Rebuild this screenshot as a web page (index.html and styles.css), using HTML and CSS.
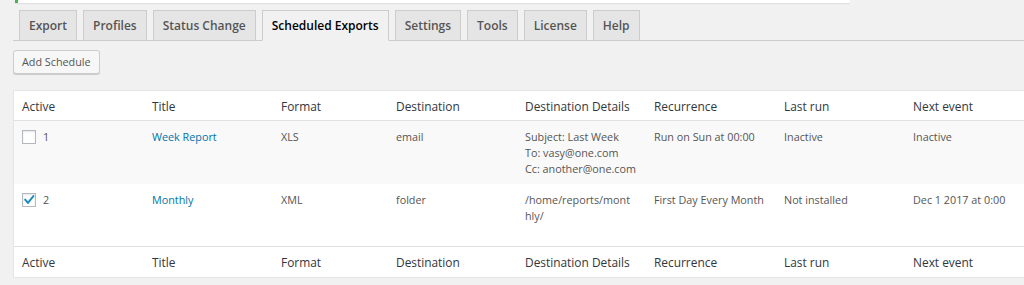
FILE: index.html
```html
<!DOCTYPE html>
<html>
<head>
<meta charset="utf-8">
<title>Scheduled Exports</title>
<link rel="stylesheet" href="styles.css">
</head>
<body>
<div class="wrap">
  <div class="notice"></div>
  <nav class="tabs">
    <a class="tab">Export</a>
    <a class="tab">Profiles</a>
    <a class="tab">Status Change</a>
    <a class="tab active">Scheduled Exports</a>
    <a class="tab">Settings</a>
    <a class="tab">Tools</a>
    <a class="tab">License</a>
    <a class="tab">Help</a>
  </nav>
  <button class="btn" type="button">Add Schedule</button>
  <table class="list">
    <colgroup>
      <col class="w130"><col class="w129"><col class="w115"><col class="w129">
      <col class="w129"><col class="w130"><col class="w129"><col class="w130">
    </colgroup>
    <thead>
      <tr class="hrow">
        <th>Active</th><th>Title</th><th>Format</th><th>Destination</th>
        <th>Destination Details</th><th>Recurrence</th><th>Last run</th><th>Next event</th>
      </tr>
    </thead>
    <tbody>
      <tr class="row r1 alt">
        <td><div class="act"><span class="cb"></span><span>1</span></div></td>
        <td><a class="link">Week Report</a></td>
        <td>XLS</td>
        <td>email</td>
        <td>Subject: Last Week<br>To: vasy@one.com<br>Cc: another@one.com</td>
        <td>Run on Sun at 00:00</td>
        <td>Inactive</td>
        <td>Inactive</td>
      </tr>
      <tr class="row r2">
        <td><div class="act"><span class="cb"><svg class="tick" viewBox="0 0 14 14"><path d="M3.2 6.6 L5.9 9.9 L11.4 3.1"/></svg></span><span>2</span></div></td>
        <td><a class="link">Monthly</a></td>
        <td>XML</td>
        <td>folder</td>
        <td>/home/reports/mont<br>hly/</td>
        <td>First Day Every Month</td>
        <td>Not installed</td>
        <td>Dec 1 2017 at 0:00</td>
      </tr>
    </tbody>
    <tfoot>
      <tr class="frow">
        <th>Active</th><th>Title</th><th>Format</th><th>Destination</th>
        <th>Destination Details</th><th>Recurrence</th><th>Last run</th><th>Next event</th>
      </tr>
    </tfoot>
  </table>
</div>
</body>
</html>
```
FILE: styles.css
```css
html, body {
  margin: 0;
  padding: 0;
  background: #f1f1f1;
  overflow: hidden;
}
body {
  font-family: "Open Sans", "Liberation Sans", sans-serif;
  font-size: 10.8px;
  color: #555;
}
.wrap {
  padding-left: 13px;
}
.notice {
  margin-left: 2px;
  width: 835px;
  height: 3px;
  box-sizing: border-box;
  background: #fff;
  border-left: 3px solid #46b450;
  box-shadow: 0 1px 1px rgba(0, 0, 0, 0.08);
}
.tabs {
  display: flex;
  padding-top: 7px;
  border-bottom: 1px solid #ccc;
}
.tab {
  display: flex;
  align-items: center;
  box-sizing: border-box;
  height: 31px;
  margin-left: 6px;
  margin-bottom: -1px;
  padding: 0 9px;
  border: 1px solid #ccc;
  background: #e5e5e5;
  color: #555;
  font-weight: 600;
  font-size: 12px;
  white-space: nowrap;
}
.tab.active {
  background: #f1f1f1;
  border-bottom-color: #f1f1f1;
  color: #000;
}
.btn {
  display: block;
  margin: 9px 0 0 0;
  height: 24px;
  padding: 0 8px;
  border: 1px solid #ccc;
  border-radius: 3px;
  background: #f7f7f7;
  box-shadow: 0 1px 0 #ccc;
  color: #555;
  font-family: inherit;
  font-size: 10.8px;
  line-height: 22px;
}
.list {
  margin-top: 16px;
  width: 1023px;
  table-layout: fixed;
  border-collapse: separate;
  border-spacing: 0;
  border: 1px solid #e5e5e5;
  background: #fff;
  box-shadow: 0 1px 1px rgba(0, 0, 0, 0.04);
}
.w130 { width: 130px; }
.w129 { width: 129px; }
.w115 { width: 115px; }
.list th {
  text-align: left;
  font-weight: 400;
  font-size: 11.9px;
  color: #32373c;
  padding: 0 8px;
  line-height: 16px;
  vertical-align: middle;
  white-space: nowrap;
}
.hrow { height: 30px; }
.hrow th { border-bottom: 1px solid #e1e1e1; }
.frow { height: 31px; }
.frow th { border-top: 1px solid #e1e1e1; }
.list td {
  vertical-align: top;
  padding: 8px 8px 0;
  line-height: 16px;
  white-space: nowrap;
}
.r1 { height: 63px; }
.r2 { height: 62px; }
.alt td { background: #f9f9f9; }
.act {
  display: flex;
  align-items: center;
  gap: 7px;
  height: 16px;
}
.cb {
  display: block;
  width: 14px;
  height: 14px;
  box-sizing: border-box;
  border: 1px solid #b4b9be;
  background: #fff;
  box-shadow: inset 0 1px 2px rgba(0, 0, 0, 0.1);
  position: relative;
}
.tick {
  position: absolute;
  left: -1px;
  top: -1px;
  width: 14px;
  height: 14px;
  fill: none;
  stroke: #1e8cbe;
  stroke-width: 2;
  stroke-linecap: round;
  stroke-linejoin: round;
}
.link {
  color: #0073aa;
  text-decoration: none;
}
```
